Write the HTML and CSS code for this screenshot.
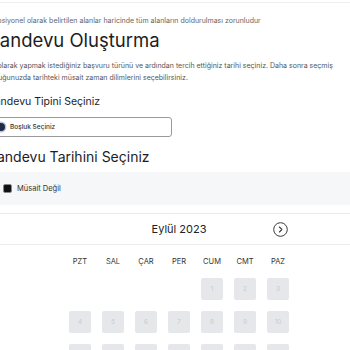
FILE: index.html
```html
<!DOCTYPE html>
<html lang="tr">
<head>
  <meta charset="UTF-8">
  <meta name="viewport" content="width=device-width, initial-scale=1.0">
  <title>Randevu Oluşturma</title>
  <link rel="stylesheet" href="styles.css">
</head>
<body>

<div class="topbar"></div>

<div class="page">
  <p class="note">Opsiyonel olarak belirtilen alanlar haricinde tüm alanların doldurulması zorunludur</p>
  <h1 class="title">Randevu Oluşturma</h1>
  <p class="intro">İlk olarak yapmak istediğiniz başvuru türünü ve ardından tercih ettiğiniz tarihi seçiniz. Daha sonra seçmiş olduğunuzda tarihteki müsait zaman dilimlerini seçebilirsiniz.</p>

  <h2 class="section-title">Randevu Tipini Seçiniz</h2>
  <label class="type-option">
    <span class="radio"></span>
    Boşluk Seçiniz
  </label>

  <h2 class="section-title big">Randevu Tarihini Seçiniz</h2>
  <div class="legend">
    <span class="swatch"></span>
    Müsait Değil
  </div>

  <div class="calendar">
    <div class="cal-head">
      <span class="nav-spacer"></span>
      <span class="month">Eylül 2023</span>
      <button class="nav-btn" aria-label="Sonraki ay">
        <svg width="15" height="15" viewBox="0 0 15 15">
          <circle cx="7.5" cy="7.5" r="6.8" fill="none" stroke="#3a3a3a" stroke-width="1"/>
          <path d="M6.4 5 L8.9 7.5 L6.4 10" fill="none" stroke="#3a3a3a" stroke-width="1.1" stroke-linecap="round" stroke-linejoin="round"/>
        </svg>
      </button>
    </div>
    <div class="weekdays">
      <span>PZT</span><span>SAL</span><span>ÇAR</span><span>PER</span><span>CUM</span><span>CMT</span><span>PAZ</span>
    </div>
    <div class="days" id="days"></div>
  </div>
</div>

<script>
  // Eylül 2023 - 1 Eylül Cuma gününe denk geliyor
  const days = document.querySelector('#days');
  const offset = 4;
  for (let i = 0; i < offset; i++) {
    const empty = document.createElement('span');
    empty.className = 'day empty';
    days.appendChild(empty);
  }
  for (let d = 1; d <= 30; d++) {
    const cell = document.createElement('span');
    cell.className = 'day disabled';
    cell.innerText = d;
    days.appendChild(cell);
  }
</script>

</body>
</html>
```

FILE: styles.css
```css
body {
  font-family: Inter, "Noto Sans", sans-serif;
  margin: 0;
  padding: 0;
  background-color: #ffffff;
  color: #222;
  overflow: hidden;
}

.topbar {
  height: 2px;
  border-bottom: 1px solid #eeeeee;
}

/* Page wrapper */
.page {
  margin-left: -12px;
  width: 382px;
  padding-top: 12px;
}

.note {
  margin: 0;
  font-size: 7px;
  line-height: 11px;
  color: #666;
  padding-left: 4px;
}

.title {
  margin: 2px 0 0;
  font-size: 18.5px;
  line-height: 24px;
  font-weight: 400;
  color: #1d1d1f;
}

.intro {
  margin: 8px 0 0;
  width: 345px;
  font-size: 7px;
  line-height: 12px;
  color: #555;
}

.section-title {
  margin: 11px 0 0;
  font-size: 10.5px;
  line-height: 14px;
  font-weight: 400;
  color: #1d1d1f;
}

.section-title.big {
  font-size: 14px;
  line-height: 18px;
}

/* Randevu tipi */
.type-option {
  margin-top: 8px;
  width: 184px;
  height: 20px;
  box-sizing: border-box;
  border: 1px solid #9a9a9a;
  border-radius: 3px;
  display: flex;
  align-items: center;
  gap: 5px;
  padding-left: 8px;
  font-size: 6.5px;
  font-weight: 500;
  color: #333;
  background: #fff;
}

.radio {
  width: 8px;
  height: 8px;
  border-radius: 50%;
  background: #1f2b45;
  box-shadow: 0 0 0 1.5px #b9c6dc;
}

/* Legend */
.legend {
  margin-top: 6px;
  height: 33px;
  background-color: #f6f7f9;
  display: flex;
  align-items: center;
  gap: 5px;
  padding-left: 15px;
  font-size: 7.5px;
  color: #333;
}

.swatch {
  width: 7px;
  height: 7px;
  background: #111;
  border: 1px solid #888;
  border-radius: 2px;
}

/* Calendar */
.calendar {
  margin-top: 8px;
  border-top: 1px solid #ececec;
}

.cal-head {
  width: 218px;
  height: 30px;
  margin: 0 auto;
  display: flex;
  align-items: center;
  justify-content: space-between;
  position: relative;
}

.cal-head::after {
  content: "";
  position: absolute;
  left: -100px;
  right: -100px;
  bottom: -1px;
  border-bottom: 1px solid #ececec;
}

.nav-spacer {
  width: 15px;
}

.month {
  font-size: 11px;
  color: #222;
}

.nav-btn {
  width: 15px;
  height: 15px;
  padding: 0;
  border: none;
  background: transparent;
  display: flex;
  cursor: pointer;
}

.weekdays,
.days {
  width: 231px;
  margin: 0 auto;
  display: grid;
  grid-template-columns: repeat(7, 33px);
  justify-items: center;
}

.weekdays {
  margin-top: 9px;
  height: 16px;
  align-items: center;
  font-size: 7.5px;
  color: #333;
}

.days {
  margin-top: 9px;
  row-gap: 11px;
}

.day {
  width: 22px;
  height: 22px;
  border-radius: 2px;
  display: flex;
  justify-content: center;
  align-items: center;
  font-size: 6.5px;
}

.day.disabled {
  background-color: #e6e7ea;
  color: #c9cbcf;
}
```
